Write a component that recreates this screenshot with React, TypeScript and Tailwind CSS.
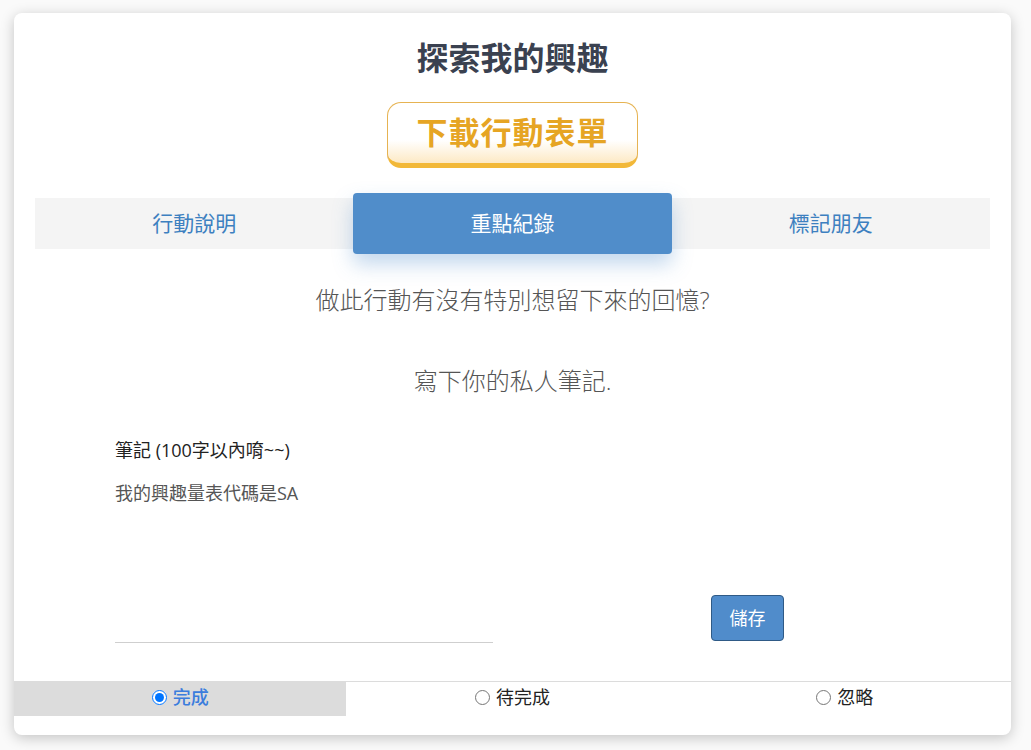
import { useState } from 'react'

const font = '"Open Sans", "Noto Sans CJK TC", "Noto Sans", sans-serif'

const tabs = ['行動說明', '重點紀錄', '標記朋友']
const statuses = ['完成', '待完成', '忽略']

export default function App() {
  const [tab, setTab] = useState(1)
  const [status, setStatus] = useState(0)
  const [note, setNote] = useState('我的興趣量表代碼是SA')

  return (
    <div className="min-h-[750px] w-[1031px] bg-[#fafafa] pt-[13px] pl-[14px]" style={{ fontFamily: font }}>
      <div className="w-[997px] h-[722px] bg-white rounded-[8px] shadow-[0_3px_14px_rgba(0,0,0,0.22)] flex flex-col">
        <h1 className="pt-[27px] text-center text-[32px] leading-[36px] font-bold text-[#3a4150]">探索我的興趣</h1>

        <div className="flex justify-center mt-[26px]">
          <button
            type="button"
            className="w-[251px] h-[66px] rounded-[14px] border border-[#e6b352] border-b-[5px] border-b-[#f2b838] bg-[linear-gradient(to_bottom,#ffffff_0%,#ffffff_62%,#fde9c4_100%)] text-[31px] font-bold text-[#e6a524] leading-none pb-[2px] tracking-[1px]"
          >
            下載行動表單
          </button>
        </div>

        <div className="mx-[21px] mt-[30px] h-[51px] bg-[#f4f4f4] grid grid-cols-3">
          {tabs.map((t, i) => (
            <button
              key={t}
              type="button"
              onClick={() => setTab(i)}
              className={
                i === tab
                  ? 'relative -my-[5px] rounded-[4px] bg-[#508dca] text-white text-[21px] shadow-[0_10px_20px_rgba(80,141,202,0.35)]'
                  : 'text-[21px] text-[#3d80c0]'
              }
            >
              {t}
            </button>
          ))}
        </div>

        <p className="mt-[36px] text-center text-[24px] leading-[30px] font-light text-[#555]">做此行動有沒有特別想留下來的回憶?</p>
        <p className="mt-[51px] text-center text-[24px] leading-[30px] font-light text-[#555]">寫下你的私人筆記.</p>

        <div className="mt-[42px] pl-[101px] flex items-end">
          <label className="w-[378px] flex flex-col">
            <span className="text-[18px] leading-[24px] text-[#222]">筆記 (100字以內唷~~)</span>
            <textarea
              value={note}
              onChange={(e) => setNote(e.target.value)}
              maxLength={100}
              className="mt-[14px] h-[167px] resize-none outline-none border-b border-[#cfcfcf] text-[18px] leading-[24px] text-[#555] pt-[5px]"
              style={{ fontFamily: font }}
            />
          </label>
          <button
            type="button"
            className="ml-[218px] mb-[2px] w-[73px] h-[46px] rounded-[4px] bg-[#508ccb] border border-[#2f5a86] text-white text-[18px]"
          >
            儲存
          </button>
        </div>

        <div className="mt-[38px] border-t border-[#dcdcdc] grid grid-cols-3">
          {statuses.map((s, i) => (
            <label
              key={s}
              className={`h-[34px] pb-[4px] flex items-center justify-center gap-[6px] cursor-pointer ${i === status ? 'bg-[#dcdcdc]' : ''}`}
            >
              <input
                type="radio"
                name="status"
                checked={i === status}
                onChange={() => setStatus(i)}
                className="m-0 w-[15px] h-[15px]"
              />
              <span className={`text-[18px] leading-[24px] ${i === status ? 'text-[#3b7ddd] font-medium' : 'text-[#222]'}`}>{s}</span>
            </label>
          ))}
        </div>
      </div>
    </div>
  )
}
